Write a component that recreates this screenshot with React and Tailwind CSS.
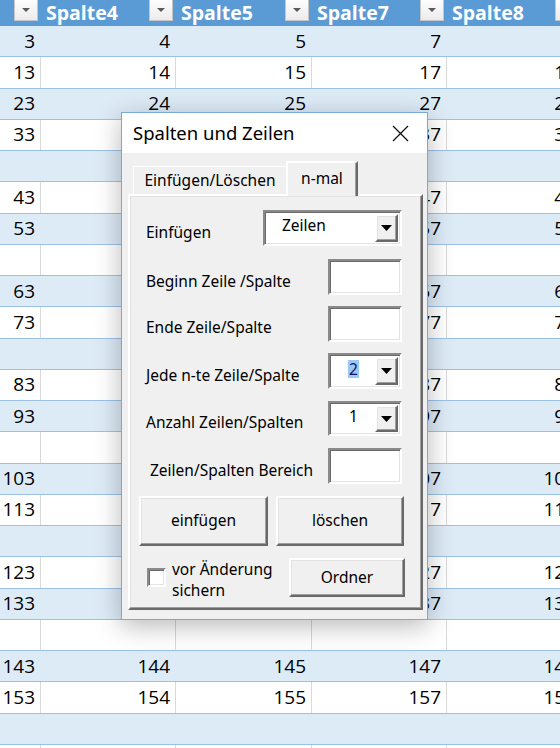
import React from "react";

const rows = [3, 13, 23, 33, null, 43, 53, null, 63, 73, null, 83, 93, null, 103, 113, null, 123, 133, null, 143, 153, null, 163];
const offsets = [0, 1, 2, 4, 5];
const headers = ["", "Spalte4", "Spalte5", "Spalte7", "Spalte8"];

const sunken =
  "bg-white border-2 border-t-[#8a8a8a] border-l-[#8a8a8a] border-b-white border-r-white shadow-[inset_1px_1px_0_#6a6a6a,inset_-1px_-1px_0_#e3e3e3]";
const raised =
  "bg-[#f0f0f0] border-2 border-t-white border-l-white border-b-[#696969] border-r-[#696969] shadow-[inset_-1px_-1px_0_#a0a0a0,inset_1px_1px_0_#e3e3e3]";

function Tri({ w = 11, h = 6, color = "#000" }) {
  return (
    <svg width={w} height={h} viewBox={`0 0 ${w} ${h}`}>
      <polygon points={`0,0 ${w},0 ${w / 2},${h}`} fill={color} />
    </svg>
  );
}

function FilterBtn() {
  return (
    <div className="self-start w-[24px] h-[21px] mr-[3px] bg-gradient-to-b from-[#fdfdfd] to-[#ececec] border border-[#c6c6c6] border-t-0 flex items-center justify-center">
      <Tri w={8} h={4} color="#5a5a5a" />
    </div>
  );
}

function DropBtn() {
  return (
    <div className={"w-[23px] h-full flex items-center justify-center " + raised}>
      <Tri w={11} h={6} />
    </div>
  );
}

function Combo({ value, w, selected, left }) {
  return (
    <div className={"flex h-full p-[2px] " + sunken} style={{ width: w }}>
      <div className={"flex-1 flex items-center pb-[4px] " + (left ? "justify-start pl-[15px]" : "justify-center")}>
        {selected ? (
          <span className="bg-[#99c9f2] text-[#10106b] px-[1px] leading-[18px]">{value}</span>
        ) : (
          <span>{value}</span>
        )}
      </div>
      <DropBtn />
    </div>
  );
}

function Row({ label, children, mt, pt, extra = "" }) {
  return (
    <div className={"flex justify-between items-center pl-[16px] pr-[19px] " + mt}>
      <span className={"whitespace-nowrap " + pt + " " + extra}>{label}</span>
      {children}
    </div>
  );
}

export default function App() {
  return (
    <div className="relative w-[560px] h-[748px] overflow-hidden bg-white font-['Open_Sans',sans-serif] text-black">
      {/* Spreadsheet */}
      <div className="w-[582px]">
        <div className="grid grid-cols-[41px_135px_136px_135px_135px] h-[26px] bg-[#5b9bd5]">
          {headers.map((h, i) => (
            <div key={i} className="flex items-center justify-between pl-[5px] overflow-hidden">
              <span className="text-white font-bold text-[19.5px] leading-none whitespace-nowrap">{h}</span>
              <FilterBtn />
            </div>
          ))}
        </div>
        {rows.map((n, r) => {
          const blue = r % 2 === 0;
          return (
            <div
              key={r}
              className={
                "grid grid-cols-[41px_135px_136px_135px_135px] h-[31.25px] border-b border-[#9bc2e6] " +
                (blue ? "bg-[#ddebf7]" : "bg-white")
              }
            >
              {offsets.map((o, c) => (
                <div
                  key={c}
                  className={
                    "flex items-center justify-end pr-[5px] text-[19px] leading-none border-r " +
                    (blue ? "border-[#ddebf7]" : "border-[#d9d9d9]")
                  }
                >
                  {n !== null ? n + o : ""}
                </div>
              ))}
            </div>
          );
        })}
      </div>

      {/* Dialog */}
      <div className="absolute left-[121px] top-[112px] w-[307px] h-[508px] border border-[#7aa7dc] bg-[#f0f0f0] shadow-[0_6px_24px_rgba(0,0,0,0.28)] flex flex-col font-['Noto_Sans',sans-serif] text-[15.5px] text-black">
        <div className="h-[40px] bg-white flex items-center justify-between pl-[11px] pr-[18px]">
          <span className="text-[18.5px]">Spalten und Zeilen</span>
          <svg width="17" height="17" viewBox="0 0 17 17">
            <path d="M1 1 L16 16 M16 1 L1 16" stroke="#111" strokeWidth="1.3" />
          </svg>
        </div>
        <div className="flex-1 flex flex-col pl-[6px] pr-[4px] pt-[8px] pb-[9px]">
          <div className="h-[33px] flex items-end pl-[5px]">
            <div className="w-[153px] h-[28px] border-t border-l border-white flex items-center justify-center pt-[1px]">
              Einfügen/Löschen
            </div>
            <div className="relative z-10 w-[72px] h-[35px] -mb-[2px] bg-[#f0f0f0] border-t-2 border-l-2 border-white border-r-2 border-r-[#696969] shadow-[inset_-1px_0_0_#a0a0a0] flex justify-center pt-[4px]">
              n-mal
            </div>
          </div>
          <div className="flex-1 border-2 border-t-white border-l-white border-b-[#696969] border-r-[#696969] shadow-[inset_-1px_-1px_0_#a0a0a0,inset_1px_1px_0_#e3e3e3] flex flex-col">
            <Row label="Einfügen" mt="mt-[14px] h-[36px]" pt="pt-[10px]">
              <Combo value="Zeilen" w={139} left />
            </Row>
            <Row label="Beginn Zeile /Spalte" mt="mt-[13px] h-[36px]" pt="pt-[10px]">
              <div className={"w-[74px] h-full " + sunken} />
            </Row>
            <Row label="Ende Zeile/Spalte" mt="mt-[11px] h-[36px]" pt="pt-[8px]">
              <div className={"w-[74px] h-full " + sunken} />
            </Row>
            <Row label="Jede n-te Zeile/Spalte" mt="mt-[11px] h-[36px]" pt="pt-[10px]">
              <Combo value="2" w={74} selected />
            </Row>
            <Row label="Anzahl Zeilen/Spalten" mt="mt-[12px] h-[35px]" pt="pt-[9px]">
              <Combo value="1" w={74} />
            </Row>
            <Row label="Zeilen/Spalten Bereich" mt="mt-[12px] h-[36px]" pt="pt-[10px]" extra="pl-[4px]">
              <div className={"w-[74px] h-full " + sunken} />
            </Row>
            <div className="mt-[12px] h-[50px] flex gap-[8px] pl-[9px]">
              <div className={"w-[129px] h-full flex items-center justify-center " + raised}>einfügen</div>
              <div className={"w-[128px] h-full flex items-center justify-center " + raised}>löschen</div>
            </div>
            <div className="mt-[12px] h-[39px] flex items-center justify-between pl-[17px] pr-[16px]">
              <div className="flex items-center gap-[6px]">
                <div className={"w-[19px] h-[19px] " + sunken} />
                <div className="leading-[21px] pt-[4px]">
                  vor Änderung
                  <br />
                  sichern
                </div>
              </div>
              <div className={"w-[116px] h-full flex items-center justify-center " + raised}>Ordner</div>
            </div>
          </div>
        </div>
      </div>
    </div>
  );
}
